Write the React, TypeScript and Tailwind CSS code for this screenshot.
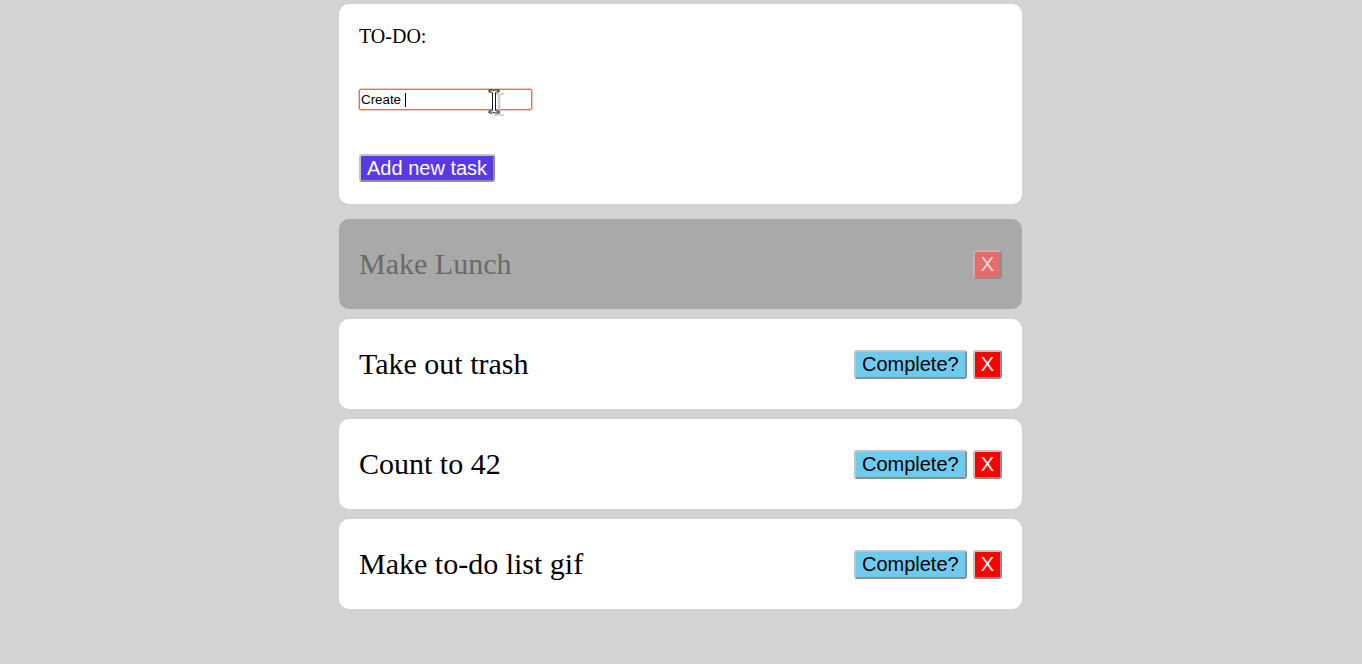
import React from "react";

interface Task {
  id: number;
  text: string;
  done: boolean;
}

const TASKS: Task[] = [
  { id: 1, text: "Make Lunch", done: true },
  { id: 2, text: "Take out trash", done: false },
  { id: 3, text: "Count to 42", done: false },
  { id: 4, text: "Make to-do list gif", done: false },
];

const serif = "font-['Liberation_Serif',serif]";
const sans = "font-['Liberation_Sans',Arial,sans-serif]";
const btn = `${sans} rounded-[3px] border-2 border-[#c4c4c4] border-r-[#8e8e8e] border-b-[#8e8e8e] px-1.5 text-[20px]`;

// mouse cursor caught in the screenshot
function IBeam() {
  const d =
    "M1 1h3.5a2 2 0 0 1 1.5 1a2 2 0 0 1 1.5-1H11v2H8.5a1 1 0 0 0-1 1v17a1 1 0 0 0 1 1H11v2H7.5a2 2 0 0 1-1.5-1a2 2 0 0 1-1.5 1H1v-2h2.5a1 1 0 0 0 1-1V4a1 1 0 0 0-1-1H1z";
  return (
    <svg width="22" height="30" viewBox="0 0 22 30" className="pointer-events-none absolute left-[129px] top-[0px]">
      <path d={d} fill="#c8c8c8" transform="translate(5,3)" opacity="0.85" />
      <path d={d} fill="#fff" stroke="#000" strokeWidth="0.9" />
    </svg>
  );
}

export default function App() {
  return (
    <div className="min-h-[664px] bg-[#d3d3d3] pt-1">
      <div className="mx-auto w-[684px]">
        <div className="flex w-[683px] flex-col">
          <div className="flex h-[200px] flex-col items-start rounded-[10px] bg-white px-5">
            <div className={`${serif} mt-[21px] text-[20px] leading-[23px] text-black`}>TO-DO:</div>
            <div className="relative mt-[41px]">
              <div
                className={`${sans} flex h-[21px] w-[173px] items-center rounded-[2px] border border-[#e0724f] px-px text-[13.33px] text-black shadow-[0_0_0_1px_#f6c6b6]`}
              >
                Create&nbsp;<span className="h-[14px] w-px bg-black" />
              </div>
              <IBeam />
            </div>
            <button className={`${btn} mt-[44px] bg-[#5a38e6] leading-[24px] text-white`}>Add new task</button>
          </div>

          <div className="mt-[15px] flex flex-col gap-[10px]">
            {TASKS.map((t) => (
              <div
                key={t.id}
                className={`flex h-[90px] items-center justify-between rounded-[10px] px-5 ${t.done ? "bg-[#a9a9a9]" : "bg-white"}`}
              >
                <span className={`${serif} text-[30px] leading-[34px] ${t.done ? "text-[#6a6a6a]" : "text-black"}`}>
                  {t.text}
                </span>
                <div className="flex items-center gap-[6px]">
                  {!t.done && (
                    <button className={`${btn} bg-[#70caee] py-px leading-[23px] text-black`}>Complete?</button>
                  )}
                  <button
                    className={`${btn} py-px leading-[23px] ${
                      t.done ? "border-[#c9b0b0] bg-[#e66c6c] text-[#f6dede]" : "bg-[#ff0000] text-white"
                    }`}
                  >
                    X
                  </button>
                </div>
              </div>
            ))}
          </div>
        </div>
      </div>
    </div>
  );
}
